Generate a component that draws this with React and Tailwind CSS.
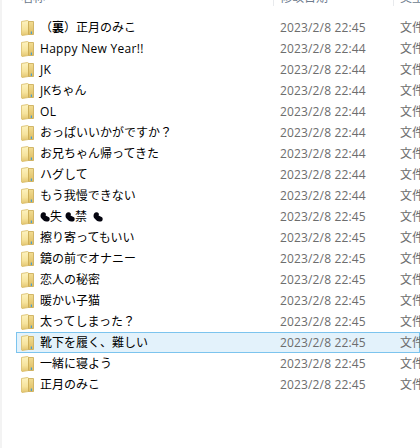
const rows = [
  ["（裏）正月のみこ", "22:45"],
  ["Happy New Year!!", "22:44"],
  ["JK", "22:44"],
  ["JKちゃん", "22:44"],
  ["OL", "22:44"],
  ["おっぱいいかがですか？", "22:44"],
  ["お兄ちゃん帰ってきた", "22:44"],
  ["ハグして", "22:44"],
  ["もう我慢できない", "22:44"],
  [null, "22:45"],
  ["擦り寄ってもいい", "22:45"],
  ["鏡の前でオナニー", "22:45"],
  ["恋人の秘密", "22:45"],
  ["暖かい子猫", "22:45"],
  ["太ってしまった？", "22:45"],
  ["靴下を履く、難しい", "22:45"],
  ["一緒に寝よう", "22:45"],
  ["正月のみこ", "22:45"],
];

function Folder({ id }) {
  return (
    <svg width="13" height="16" viewBox="0 0 13 16" className="shrink-0">
      <defs>
        <linearGradient id={"fl" + id} x1="0" y1="0" x2="0" y2="1">
          <stop offset="0" stopColor="#fdf3c0" />
          <stop offset="0.6" stopColor="#f6e39c" />
          <stop offset="1" stopColor="#e3c570" />
        </linearGradient>
        <linearGradient id={"fr" + id} x1="0" y1="0" x2="0" y2="1">
          <stop offset="0" stopColor="#f2dc92" />
          <stop offset="1" stopColor="#dcbc62" />
        </linearGradient>
      </defs>
      <path d="M0.5 1.5 L6.5 0.5 L7.5 1 L7.5 14.5 L1 15.5 L0.5 15 Z" fill={"url(#fl" + id + ")"} stroke="#d8bb66" strokeWidth="0.8" />
      <path d="M7.5 1.5 L12.5 1.5 L12.5 14.5 L7.5 14.5 Z" fill={"url(#fr" + id + ")"} stroke="#c8a850" strokeWidth="0.8" />
      <rect x="9.8" y="11.5" width="1.2" height="2.5" fill="#4a9fd0" />
    </svg>
  );
}

function Blot() {
  return (
    <svg width="10" height="10" viewBox="0 0 10 10" className="shrink-0">
      <path d="M0.5 4 C0.5 1.5 2 0 4 0.3 C5.8 0.6 6.4 2 5.6 3.6 L9 5.2 C10 6 10 8.5 8.6 9.3 C7 9.9 4.6 9.4 3.6 8.4 C2.4 7.2 0.5 6.2 0.5 4 Z" fill="#05050f" />
    </svg>
  );
}

function Masked() {
  return (
    <div className="flex items-center">
      <div className="mr-[0px]"><Blot /></div>
      <span>失</span>
      <div className="ml-[3px]"><Blot /></div>
      <span>禁</span>
      <div className="ml-[6px]"><Blot /></div>
    </div>
  );
}

export default function App() {
  return (
    <div className="w-[420px] h-[448px] overflow-hidden bg-white border-l-2 border-[#f3f3f3] text-[12px] leading-[21px] font-['Open_Sans','Noto_Sans_CJK_JP',sans-serif]">
      <div className="h-[17px] overflow-hidden flex items-start text-[#6d7b8d]">
        <div className="w-[271px] shrink-0 pl-[19px] h-[6px] overflow-hidden"><div className="-mt-[13px]">名称</div></div>
        <div className="w-[120px] shrink-0 pl-[6px] h-[6px] overflow-hidden border-l border-[#e8eaed]"><div className="-mt-[13px]">修改日期</div></div>
        <div className="w-[27px] shrink-0 pl-[6px] h-[6px] overflow-hidden border-l border-[#e8eaed] whitespace-nowrap"><div className="-mt-[13px]">类型</div></div>
      </div>
      {rows.map(([name, time], i) => {
        const selected = i === 15;
        return (
          <div key={i} className="h-[21px] ml-[14px] flex items-center relative">
            {selected && (
              <div className="absolute inset-0 bg-[#e3f2fb] border border-[#7cc4ee]" />
            )}
            <div className="relative flex items-center w-full">
              <div className="w-[24px] shrink-0 pl-[5px] flex items-center"><Folder id={i} /></div>
              <div className={i >= 1 && i <= 4 && i !== 3 ? "w-[240px] shrink-0 text-black whitespace-nowrap tracking-[0.3px]" : "w-[240px] shrink-0 text-black whitespace-nowrap"}>
                {name === null ? <Masked /> : i === 0 ? <>（<span className="font-bold">裏</span>）正月のみこ</> : name}
              </div>
              <div className="w-[120px] shrink-0 text-[#6d6d6d] whitespace-nowrap tracking-[0.15px]">2023/2/8 {time}</div>
              <div className="shrink-0 text-[#6d6d6d] whitespace-nowrap">文件夹</div>
            </div>
          </div>
        );
      })}
    </div>
  );
}
